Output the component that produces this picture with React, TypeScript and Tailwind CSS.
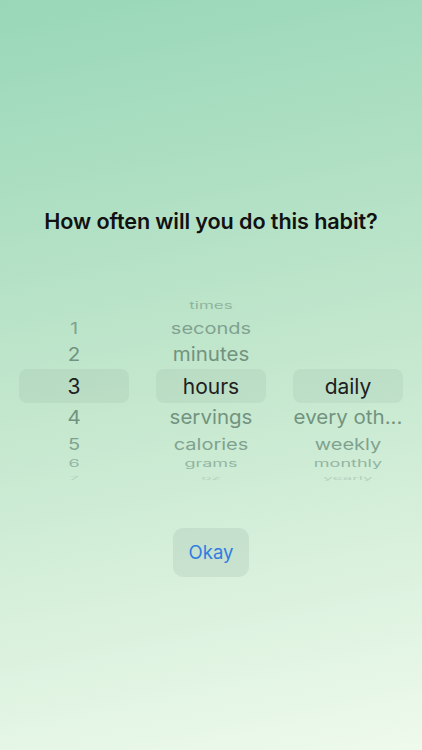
import React from "react"

type Row = { h: string; cls: string; tx: string }

// wheel rows from -3 to +4 around the selected one
const rows: Row[] = [
  { h: "h-[21px]", cls: "text-[#8fb3a0]", tx: "scale-y-[0.6] text-[17px]" },
  { h: "h-[24px]", cls: "text-[#7fa290]", tx: "scale-y-[0.8] text-[20px]" },
  { h: "h-[29px]", cls: "text-[#72937f]", tx: "scale-y-[0.93] text-[20.5px]" },
  { h: "h-[34px]", cls: "text-[#1d211f]", tx: "text-[21px]" },
  { h: "h-[29px]", cls: "text-[#72937f]", tx: "scale-y-[0.93] text-[20.5px]" },
  { h: "h-[24px]", cls: "text-[#7fa290]", tx: "scale-y-[0.8] text-[20px]" },
  { h: "h-[16px]", cls: "text-[#93b5a2]", tx: "scale-y-[0.55] text-[18px]" },
  { h: "h-[12px]", cls: "text-[#b5d1bf]", tx: "scale-y-[0.25] text-[17px]" },
]

const numbers = ["", "1", "2", "3", "4", "5", "6", "7"]
const units = ["times", "seconds", "minutes", "hours", "servings", "calories", "grams", "oz"]
const freqs = ["", "", "", "daily", "every oth...", "weekly", "monthly", "yearly"]

function Wheel(props: { items: string[] }): JSX.Element {
  return (
    <div className="flex flex-col">
      {rows.map((r, i) => (
        <div
          key={i}
          className={`${r.h} flex items-center justify-center overflow-visible ${i === 3 ? "rounded-lg bg-[rgba(60,90,75,0.065)]" : ""}`}
        >
          <span className={`${r.cls} ${r.tx} leading-none whitespace-nowrap`}>{props.items[i]}</span>
        </div>
      ))}
    </div>
  )
}

export default function App(): JSX.Element {
  return (
    <div
      className="w-[422px] h-[750px] overflow-hidden flex flex-col items-center bg-[linear-gradient(168deg,#98d7b8_0%,#c3e7cd_50%,#eefaec_100%)]"
      style={{ fontFamily: "Inter, 'Noto Sans', sans-serif" }}
    >
      <h1 className="mt-[207px] h-[28px] leading-[28px] text-[21.6px] font-semibold text-[#111] tracking-[-0.1px]">
        How often will you do this habit?
      </h1>
      <div className="mt-[60px] w-full px-[19px] grid grid-cols-3 gap-[27px]">
        <Wheel items={numbers} />
        <Wheel items={units} />
        <Wheel items={freqs} />
      </div>
      <button className="mt-[44px] w-[76px] h-[49px] rounded-[10px] bg-[rgba(60,90,75,0.09)] text-[#2f7de0] text-[18.5px]">
        Okay
      </button>
    </div>
  )
}
